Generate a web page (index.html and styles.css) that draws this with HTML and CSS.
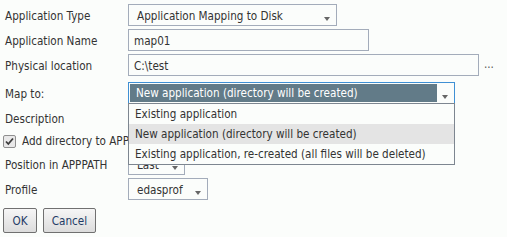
FILE: index.html
```html
<!DOCTYPE html>
<html>
<head>
<meta charset="utf-8">
<link rel="stylesheet" href="styles.css">
</head>
<body>
<div class="form">
  <div class="row">
    <span class="lbl">Application Type</span>
    <div class="select w-type"><span class="val">Application Mapping to Disk</span><span class="arrow"></span></div>
  </div>
  <div class="row">
    <span class="lbl">Application Name</span>
    <div class="input w-name">map01</div>
  </div>
  <div class="row">
    <span class="lbl">Physical location</span>
    <div class="input w-loc">C:\test</div>
    <span class="dots">...</span>
  </div>
  <div class="row row-map">
    <span class="lbl">Map to:</span>
    <div class="field">
      <div class="select focus w-map"><span class="val chosen">New application (directory will be created)</span><span class="arrow"></span></div>
      <ul class="menu">
        <li>Existing application</li>
        <li class="hover">New application (directory will be created)</li>
        <li>Existing application, re-created (all files will be deleted)</li>
      </ul>
    </div>
  </div>
  <div class="row">
    <span class="lbl">Description</span>
    <div class="input w-name"></div>
  </div>
  <div class="row row-check">
    <span class="check"><svg width="13" height="13" viewBox="0 0 13 13"><rect x="0.5" y="0.5" width="12" height="12" rx="1.5" fill="#e9e9e9" stroke="#8f8f8f"/><path d="M3 6.5 L5.3 9 L10 3.5" fill="none" stroke="#3c3c3c" stroke-width="1.8"/></svg></span>
    <span class="check-text">Add directory to APPPATH</span>
  </div>
  <div class="row">
    <span class="lbl">Position in APPPATH</span>
    <div class="select w-pos"><span class="val">Last</span><span class="arrow"></span></div>
  </div>
  <div class="row">
    <span class="lbl">Profile</span>
    <div class="select w-prof"><span class="val">edasprof</span><span class="arrow"></span></div>
  </div>
  <div class="buttons">
    <button class="btn btn-ok">OK</button>
    <button class="btn btn-cancel">Cancel</button>
  </div>
</div>
</body>
</html>
```

FILE: styles.css
```css
html, body {
  margin: 0;
  padding: 0;
  background: #fbfdfb;
}
body {
  font-family: "DejaVu Sans Condensed", "DejaVu Sans", sans-serif;
  font-stretch: condensed;
  font-size: 11.6px;
  color: #333;
}
.form {
  display: flex;
  flex-direction: column;
  padding-top: 4px;
}
.row {
  display: flex;
  align-items: center;
  height: 22px;
  margin-bottom: 3px;
}
.lbl {
  width: 123px;
  padding-left: 5px;
  padding-top: 2px;
  flex: none;
}
.select, .input {
  box-sizing: border-box;
  height: 22px;
  border: 1px solid #a3acba;
  background: #fbfdfb;
  display: flex;
  align-items: center;
  position: relative;
  white-space: nowrap;
}
.select .val {
  padding-left: 8px;
  padding-top: 2px;
}
.input {
  padding-left: 5px;
  padding-top: 2px;
}
.arrow {
  position: absolute;
  right: 6px;
  top: 12px;
  width: 0;
  height: 0;
  border-left: 3.5px solid transparent;
  border-right: 3.5px solid transparent;
  border-top: 4px solid #666;
}
.w-type { width: 209px; }
.w-name { width: 241px; }
.w-loc { width: 351px; }
.w-map { width: 327px; }
.w-pos { width: 57px; }
.w-prof { width: 80px; }
.dots {
  margin-left: 5px;
  color: #555;
  position: relative;
  top: -1px;
}
.row-map {
  margin-top: 3px;
}
.field {
  position: relative;
}
.select.focus {
  border-color: #3f90d4;
}
.select .val.chosen {
  background: #627b88;
  color: #fff;
  margin: 1px;
  padding-left: 6px;
  padding-top: 0;
  height: 18px;
  line-height: 18px;
  width: 301px;
}
.menu {
  position: absolute;
  z-index: 5;
  left: 0;
  top: 21px;
  width: 327px;
  box-sizing: border-box;
  margin: 0;
  padding: 0;
  list-style: none;
  border: 1px solid #7d8690;
  background: #fbfdfb;
}
.menu li {
  height: 20px;
  line-height: 20px;
  padding-left: 6px;
  white-space: nowrap;
}
.menu li.hover {
  background: #e4e4e4;
}
.row-check {
  height: 18px;
  padding-left: 3px;
}
.check {
  width: 13px;
  height: 13px;
  display: flex;
}
.check-text {
  margin-left: 6px;
  white-space: nowrap;
}
.buttons {
  display: flex;
  gap: 6px;
  padding-left: 3px;
  margin-top: 5px;
}
.btn {
  height: 25px;
  box-sizing: border-box;
  border: 1px solid #707070;
  border-radius: 2px;
  background: linear-gradient(#f6f6f6, #dcdcdc);
  font-family: inherit;
  font-stretch: condensed;
  font-size: 11.6px;
  color: #1f3b66;
  padding: 0;
}
.btn-ok { width: 34px; }
.btn-cancel { width: 53px; }
```
